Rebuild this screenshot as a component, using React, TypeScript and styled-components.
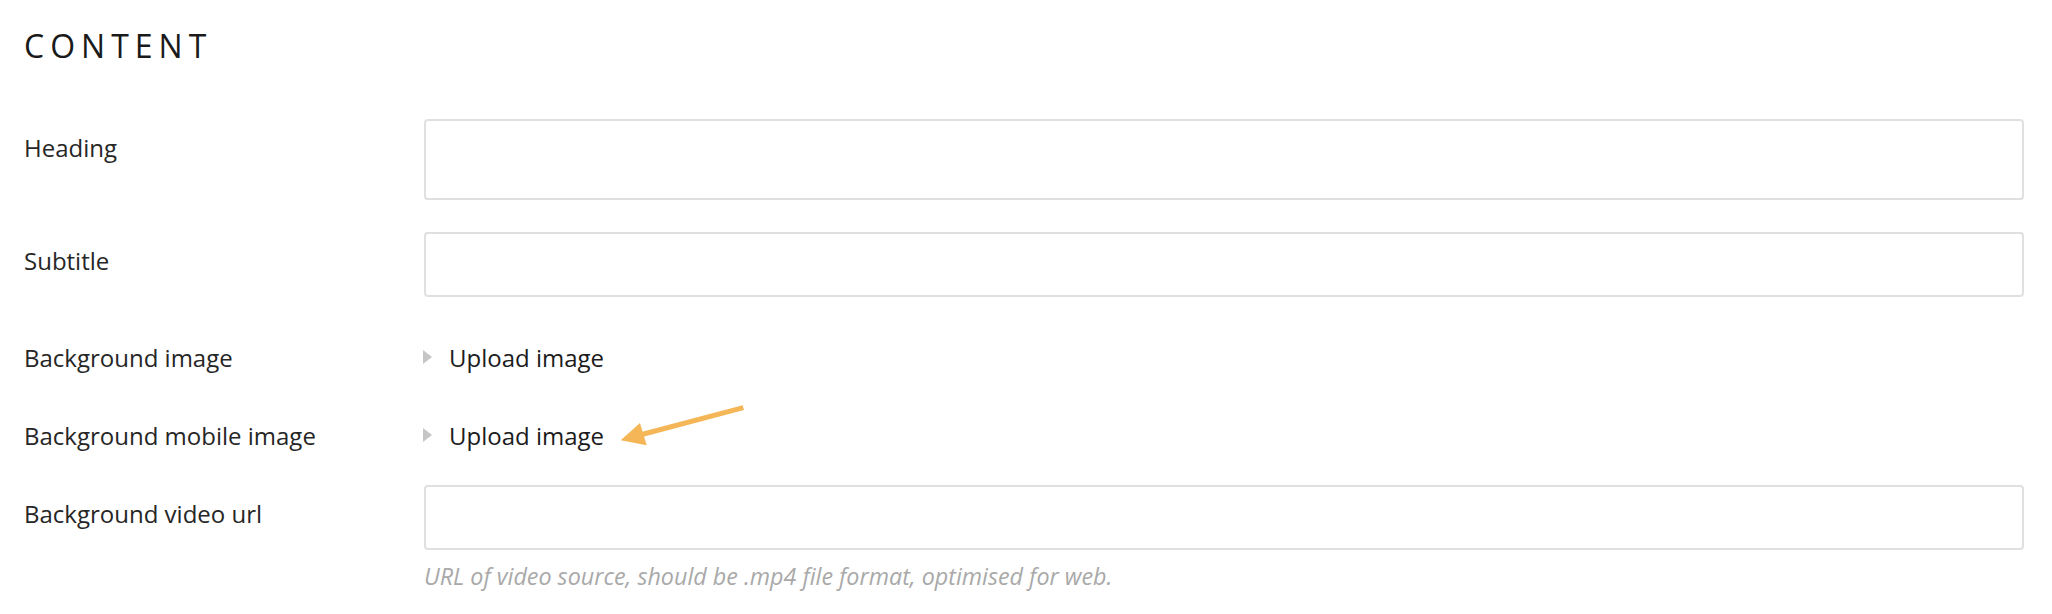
import React from 'react'
import styled, { createGlobalStyle } from 'styled-components'

const GlobalStyle = createGlobalStyle`
  html, body {
    margin: 0;
    padding: 0;
    background: #ffffff;
  }
  body {
    font-family: "Open Sans", "Noto Sans", "Liberation Sans", sans-serif;
    color: #1f1f1f;
  }
`

const Page = styled.div`
  padding: 26px 28px 0 24px;
`

const Title = styled.h2`
  margin: 0 0 53px;
  font-size: 32px;
  line-height: 40px;
  font-weight: 400;
  letter-spacing: 6px;
  text-transform: uppercase;
  color: #1a1a1a;
`

const Row = styled.div`
  display: grid;
  grid-template-columns: 400px 1fr;
  margin-bottom: 32px;
`

const Label = styled.label`
  padding-top: 14px;
  font-size: 24px;
  line-height: 30px;
  font-weight: 400;
  color: #262626;
`

const Field = styled.div`
  position: relative;
  display: flex;
  flex-direction: column;
`

const TextInput = styled.input<{ $tall?: boolean }>`
  box-sizing: border-box;
  width: 100%;
  height: ${(p) => (p.$tall ? '81px' : '65px')};
  border: 2px solid #e0e0e0;
  border-radius: 4px;
  background: #fff;
  outline: none;
  font: inherit;
  font-size: 22px;
  padding: 0 16px;
`

const Upload = styled.div`
  display: flex;
  align-items: center;
  gap: 17px;
  padding: 14px 0 2px;
  font-size: 24px;
  line-height: 30px;
  color: #1c1c1c;
  cursor: pointer;
`

const Caret = styled.span`
  width: 0;
  height: 0;
  margin-left: -1px;
  margin-top: -2px;
  border-top: 7px solid transparent;
  border-bottom: 7px solid transparent;
  border-left: 9px solid #c6c6c6;
`

const Hint = styled.div`
  margin-top: 12px;
  font-size: 23.3px;
  line-height: 28px;
  font-style: italic;
  color: #a9a9a9;
`

const Pointer = styled.svg`
  position: absolute;
  left: 194px;
  top: -3px;
  overflow: visible;
`

function ArrowMark() {
  return (
    <Pointer width="130" height="46" viewBox="0 0 130 46">
      <line x1="125.3" y1="3.7" x2="22" y2="31" stroke="#f4b656" strokeWidth="5" />
      <polygon points="2.7,36.3 22,19 28.7,41.3" fill="#f4b656" />
    </Pointer>
  )
}

type UploadRowProps = {
  label: string
  marked?: boolean
}

function UploadRow(props: UploadRowProps) {
  return (
    <Row>
      <Label>{props.label}</Label>
      <Field>
        <Upload>
          <Caret />
          Upload image
        </Upload>
        {props.marked && <ArrowMark />}
      </Field>
    </Row>
  )
}

export default function App() {
  return (
    <>
      <GlobalStyle />
      <Page>
        <Title>Content</Title>
        <Row>
          <Label>Heading</Label>
          <Field>
            <TextInput $tall />
          </Field>
        </Row>
        <Row>
          <Label>Subtitle</Label>
          <Field>
            <TextInput />
          </Field>
        </Row>
        <UploadRow label="Background image" />
        <UploadRow label="Background mobile image" marked />
        <Row>
          <Label>Background video url</Label>
          <Field>
            <TextInput />
            <Hint>URL of video source, should be .mp4 file format, optimised for web.</Hint>
          </Field>
        </Row>
      </Page>
    </>
  )
}
